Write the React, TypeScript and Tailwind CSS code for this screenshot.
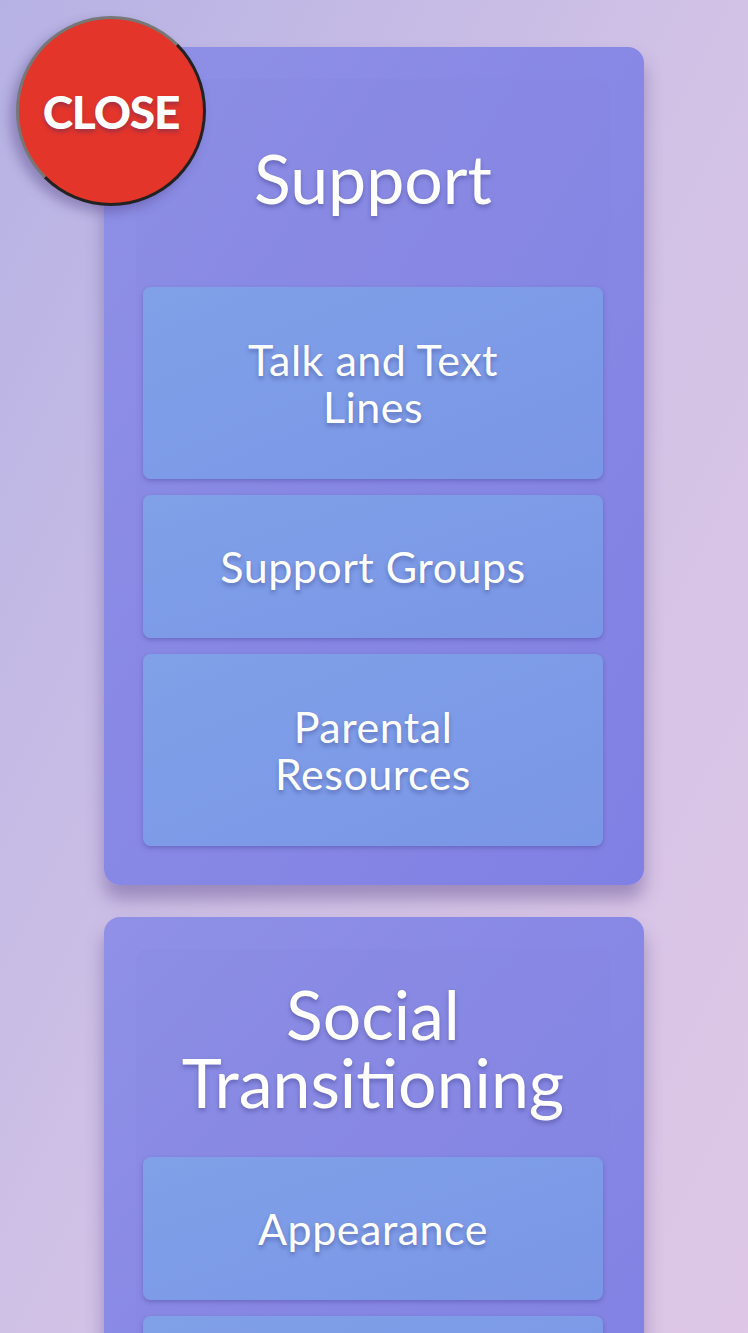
const sections: { title: string[]; items: string[][] }[] = [
  {
    title: ["Support"],
    items: [["Talk and Text", "Lines"], ["Support Groups"], ["Parental", "Resources"]],
  },
  {
    title: ["Social", "Transitioning"],
    items: [["Appearance"], ["Names and Pronouns"]],
  },
];

const shadowText = "[text-shadow:0_3px_4px_rgba(40,40,110,0.35)]";

const ItemButton = ({ lines }: { lines: string[] }) => {
  const tall = lines.length > 1;
  return (
    <button
      className={`w-full rounded-lg bg-gradient-to-br from-[#80a0e8] to-[#7a96e6] shadow-[0_2px_4px_rgba(60,50,140,0.35)] text-white text-[43px] leading-[47px] tracking-[0.5px] ${shadowText} flex flex-col items-center justify-center ${
        tall ? "h-[192px]" : "h-[143px]"
      }`}
    >
      {lines.map((l) => (
        <span key={l}>{l}</span>
      ))}
    </button>
  );
};

export default function App() {
  return (
    <div
      className="relative min-h-[1333px] w-full overflow-hidden bg-gradient-to-br from-[#b6b2e4] via-[#d2c2e6] to-[#e0c8e6] text-white"
      style={{ fontFamily: "Lato, 'Noto Sans', sans-serif" }}
    >
      <button className="absolute left-[16px] top-[16px] z-10 flex h-[190px] w-[190px] items-center justify-center rounded-full border-[3px] border-t-[#777] border-l-[#777] border-b-[#222] border-r-[#222] bg-[#e4352a] shadow-[-6px_6px_12px_rgba(60,40,110,0.35)]">
        <span className={`text-[46px] font-black tracking-tight text-white ${shadowText}`}>CLOSE</span>
      </button>

      <div className="flex flex-col items-start gap-8 pl-[104px] pt-[47px]">
        {sections.map((s) => (
          <div
            key={s.title.join(" ")}
            className="w-[540px] rounded-2xl bg-gradient-to-br from-[#8f90e6] to-[#8080e4] p-8 pr-[34px] shadow-[0_14px_18px_rgba(90,70,140,0.45)]"
          >
            <div className="rounded-xl bg-gradient-to-br from-[#8a8be2]/60 to-[#8282e2]/60 px-[7px] pb-[7px]">
              <div className="flex h-[208px] flex-col items-center justify-center pb-[10px]">
                {s.title.map((t) => (
                  <div key={t} className={`text-[68px] leading-[68px] ${shadowText}`}>
                    {t}
                  </div>
                ))}
              </div>
              <div className="flex flex-col gap-4">
                {s.items.map((it) => (
                  <ItemButton key={it.join(" ")} lines={it} />
                ))}
              </div>
            </div>
          </div>
        ))}
      </div>
    </div>
  );
}
